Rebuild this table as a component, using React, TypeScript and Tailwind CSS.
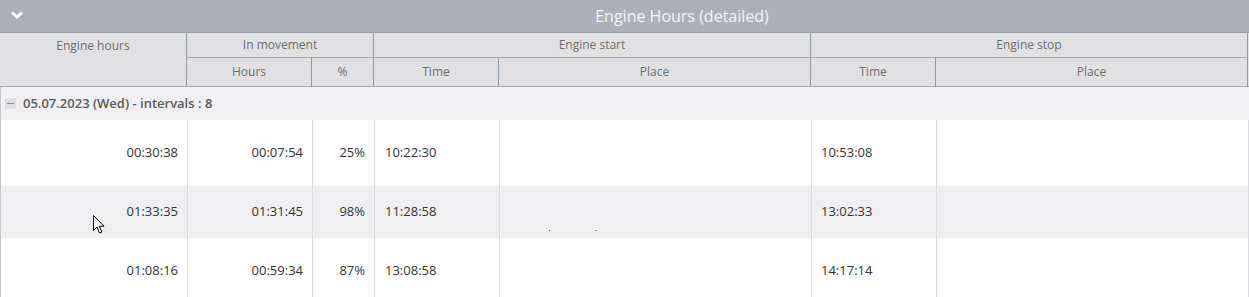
import React from "react";

const rows = [
  { eh: "00:30:38", mh: "00:07:54", pct: "25%", st: "10:22:30", et: "10:53:08", h: 66, bg: "bg-white" },
  { eh: "01:33:35", mh: "01:31:45", pct: "98%", st: "11:28:58", et: "13:02:33", h: 52, bg: "bg-[#efeff1]" },
  { eh: "01:08:16", mh: "00:59:34", pct: "87%", st: "13:08:58", et: "14:17:14", h: 66, bg: "bg-white" },
];

const cols = "grid-cols-[187px_125px_62px_125px_312px_125px_312px]";

export default function App() {
  return (
    <div
      className="relative w-[1249px] h-[297px] overflow-hidden bg-white"
      style={{ fontFamily: '"Open Sans", "Noto Sans", sans-serif' }}
    >
      {/* Title bar */}
      <div className="relative flex h-[33px] items-center justify-center bg-[#aeb0b8] border-b border-[#9c9ea6]">
        <svg className="absolute left-[10px] top-[10px]" width="14" height="10" viewBox="0 0 14 10">
          <path d="M2 2.5 L7 7 L12 2.5" fill="none" stroke="#ffffff" strokeWidth="3" strokeLinecap="butt" />
        </svg>
        <span className="text-[16px] leading-none text-[#f4f4f6] pl-[115px]">Engine Hours (detailed)</span>
      </div>

      {/* Header */}
      <div className={`grid ${cols} grid-rows-[25px_28px] bg-[#e1e1e3] text-[12px] text-[#6e6e6e] border-b border-[#a9abb0] shadow-[0_1px_0_#d4d4d6]`}>
        <div className="row-span-2 border-r border-[#8d99a5] flex justify-center pt-[4px]">Engine hours</div>
        <div className="col-span-2 border-r border-b border-[#8d99a5] border-b-[#a3a7ad] flex items-center justify-center">In movement</div>
        <div className="col-span-2 border-r border-b border-[#8d99a5] border-b-[#a3a7ad] flex items-center justify-center">Engine start</div>
        <div className="col-span-2 border-r border-b border-[#8d99a5] border-b-[#a3a7ad] flex items-center justify-center">Engine stop</div>
        <div className="border-r border-[#8d99a5] flex items-center justify-center pb-[1px]">Hours</div>
        <div className="border-r border-[#8d99a5] flex items-center justify-center pb-[1px]">%</div>
        <div className="border-r border-[#8d99a5] flex items-center justify-center pb-[1px]">Time</div>
        <div className="border-r border-[#8d99a5] flex items-center justify-center pb-[1px]">Place</div>
        <div className="border-r border-[#8d99a5] flex items-center justify-center pb-[1px]">Time</div>
        <div className="border-r border-[#8d99a5] flex items-center justify-center pb-[1px]">Place</div>
      </div>

      {/* Group row */}
      <div className="flex h-[33px] items-center bg-[#f0f0f2] border-l border-[#c8c8ca] pl-[4px]">
        <div className="flex h-[11px] w-[11px] items-center justify-center bg-[#dedee0]">
          <div className="h-[1px] w-[7px] bg-[#8a8a8a]" />
        </div>
        <span className="ml-[7px] text-[13px] font-semibold text-[#5b5b5b]">05.07.2023 (Wed) - intervals : 8</span>
      </div>

      {/* Data rows */}
      {rows.map((r, i) => (
        <div
          key={i}
          className={`grid ${cols} ${r.bg} border-l border-[#c8c8ca] text-[13px] text-[#333333]`}
          style={{ height: r.h }}
        >
          <div className="border-r border-[#dcdcde] flex items-center justify-end pr-[9px]">{r.eh}</div>
          <div className="border-r border-[#dcdcde] flex items-center justify-end pr-[9px]">{r.mh}</div>
          <div className="border-r border-[#dcdcde] flex items-center justify-end pr-[9px]">{r.pct}</div>
          <div className="border-r border-[#dcdcde] flex items-center pl-[10px]">{r.st}</div>
          <div className="relative border-r border-[#dcdcde]">
            {i === 1 && (
              <>
                <div className="absolute left-[49px] top-[44px] h-[1px] w-[1px] bg-[#555555]" />
                <div className="absolute left-[95px] top-[44px] h-[1px] w-[2px] bg-[#999999]" />
              </>
            )}
          </div>
          <div className="border-r border-[#dcdcde] flex items-center pl-[9px]">{r.et}</div>
          <div className="border-r border-[#dcdcde]" />
        </div>
      ))}

      {/* Mouse cursor */}
      <svg className="absolute left-[93px] top-[215px]" width="13" height="20" viewBox="0 0 13 20">
        <path
          d="M0.5 0.5 L0.5 15.5 L4 12 L6.5 18 L8.8 17 L6.3 11.2 L11 11.2 Z"
          fill="#ffffff"
          stroke="#000000"
          strokeWidth="1"
          strokeLinejoin="miter"
        />
      </svg>
    </div>
  );
}
